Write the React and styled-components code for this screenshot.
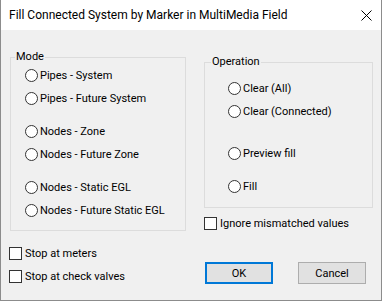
import React from 'react';
import styled, { createGlobalStyle } from 'styled-components';

const Global = createGlobalStyle`
  html, body { margin: 0; padding: 0; background: #f0f0f0; }
  * { box-sizing: border-box; }
`;

const Window = styled.div`
  width: 382px;
  height: 301px;
  display: flex;
  flex-direction: column;
  border: 1px solid #8c8c8c;
  border-top: none;
  background: #f0f0f0;
  font-family: Roboto, "Noto Sans", "Liberation Sans", sans-serif;
  color: #000;
`;

const TitleBar = styled.div`
  height: 30px;
  flex: none;
  background: #fff;
  display: flex;
  align-items: center;
  justify-content: space-between;
  padding: 0 9px 0 8px;
  font-size: 12px;
`;

const TitleText = styled.span`
  white-space: nowrap;
`;

const Body = styled.div`
  flex: 1;
  display: flex;
  gap: 18px;
  padding-left: 8px;
  font-size: 11px;
`;

const Column = styled.div`
  display: flex;
  flex-direction: column;
  width: ${p => p.$w}px;
  padding-top: ${p => p.$top}px;
`;

const GroupBox = styled.div`
  position: relative;
  border: 1px solid #dcdcdc;
  margin-left: ${p => p.$indent || 0}px;
  height: ${p => p.$h}px;
  padding: ${p => p.$pt}px 0 0 ${p => p.$pl}px;
  display: flex;
  flex-direction: column;
`;

const Legend = styled.span`
  position: absolute;
  top: -8px;
  left: ${p => p.$x}px;
  padding: 0 1px;
  background: #f0f0f0;
  line-height: 14px;
  white-space: nowrap;
`;

const OptionRow = styled.label`
  display: flex;
  align-items: center;
  height: 23px;
  gap: ${p => p.$gapX || 2}px;
  margin-top: ${p => p.$gap || 0}px;
  white-space: nowrap;
`;

const RadioCircle = styled.span`
  width: 13px;
  height: 13px;
  flex: none;
  border-radius: 50%;
  border: 1px solid #333;
  background: #fff;
`;

const CheckBox = styled.span`
  width: 13px;
  height: 13px;
  flex: none;
  border: 1px solid #333;
  background: #fff;
`;

const ButtonRow = styled.div`
  display: flex;
  gap: 25px;
  margin-top: 27px;
  margin-left: 1px;
`;

const Button = styled.button`
  width: 68px;
  height: 22px;
  padding: 0;
  font: inherit;
  font-size: 11px;
  color: #000;
  background: #e1e1e1;
  border: ${p => (p.$default ? '2px solid #0078d7' : '1px solid #adadad')};
  border-radius: 0;
`;

const modes = [
  { label: 'Pipes - System' },
  { label: 'Pipes - Future System' },
  { label: 'Nodes - Zone', gap: 10 },
  { label: 'Nodes - Future Zone' },
  { label: 'Nodes - Static EGL', gap: 10 },
  { label: 'Nodes - Future Static EGL' },
];

const ops = [
  { label: 'Clear (All)' },
  { label: 'Clear (Connected)' },
  { label: 'Preview fill', gap: 19 },
  { label: 'Fill', gap: 10 },
];

const CloseIcon = () => (
  <svg width="11" height="11" viewBox="0 0 11 11">
    <path d="M0.5 0.5 L10.5 10.5 M10.5 0.5 L0.5 10.5" stroke="#000" strokeWidth="1" fill="none" />
  </svg>
);

export default function App() {
  return (
    <>
      <Global />
      <Window>
        <TitleBar>
          <TitleText>Fill Connected System by Marker in MultiMedia Field</TitleText>
          <CloseIcon />
        </TitleBar>
        <Body>
          <Column $w={177} $top={27}>
            <GroupBox $indent={1} $h={174} $pt={6} $pl={14}>
              <Legend $x={4}>Mode</Legend>
              {modes.map(m => (
                <OptionRow key={m.label} $gap={m.gap}>
                  <RadioCircle />
                  {m.label}
                </OptionRow>
              ))}
            </GroupBox>
            <OptionRow $gap={11} $gapX={3}>
              <CheckBox />
              Stop at meters
            </OptionRow>
            <OptionRow $gapX={3}>
              <CheckBox />
              Stop at check valves
            </OptionRow>
          </Column>
          <Column $w={169} $top={32}>
            <GroupBox $h={146} $pt={14} $pl={23}>
              <Legend $x={6}>Operation</Legend>
              {ops.map(o => (
                <OptionRow key={o.label} $gap={o.gap}>
                  <RadioCircle />
                  {o.label}
                </OptionRow>
              ))}
            </GroupBox>
            <OptionRow $gap={4} $gapX={3}>
              <CheckBox />
              Ignore mismatched values
            </OptionRow>
            <ButtonRow>
              <Button $default>OK</Button>
              <Button>Cancel</Button>
            </ButtonRow>
          </Column>
        </Body>
      </Window>
    </>
  );
}
